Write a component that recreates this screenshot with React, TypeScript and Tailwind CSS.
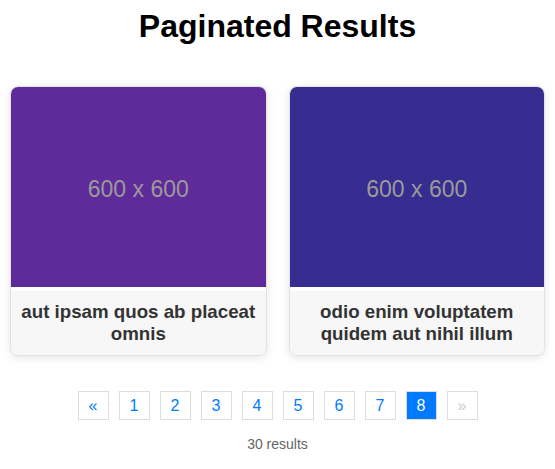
import React from "react";

const items = [
  { title: "aut ipsam quos ab placeat omnis", color: "bg-[#5f2b9b]" },
  { title: "odio enim voluptatem quidem aut nihil illum", color: "bg-[#372c8f]" },
];

export default function App() {
  const pages = [1, 2, 3, 4, 5, 6, 7, 8];
  return (
    <div className="w-[555px] min-h-[469px] bg-white px-[10px] font-['Liberation_Sans',Arial,sans-serif]">
      <h1 className="pt-[8px] text-center text-[32px] font-bold leading-[37px] text-black">
        Paginated Results
      </h1>
      <div className="mt-[41px] grid grid-cols-2 gap-[22px]">
        {items.map((it) => (
          <div
            key={it.title}
            className="overflow-hidden rounded-[8px] border border-[#e2e2e2] bg-white shadow-[0_2px_8px_rgba(0,0,0,0.1)]"
          >
            <div className={`flex h-[200px] items-center justify-center pt-[5px] ${it.color}`}>
              <span className="text-[23px] text-[#9a9a9a]">600 x 600</span>
            </div>
            <div className="mt-[4px] bg-[#f7f7f7] px-[10px] py-[10px] text-center text-[18.72px] font-bold leading-[22px] text-[#333]">
              {it.title}
            </div>
          </div>
        ))}
      </div>
      <div className="mt-[35px] flex justify-center gap-[10px]">
        <button className="h-[29px] w-[31px] border border-[#ddd] bg-white text-[16px] text-[#007bff]">«</button>
        {pages.map((p) => (
          <button
            key={p}
            className={
              p === 8
                ? "h-[29px] w-[31px] border border-[#ddd] bg-[#007bff] text-[16px] text-white"
                : "h-[29px] w-[31px] border border-[#ddd] bg-white text-[16px] text-[#007bff]"
            }
          >
            {p}
          </button>
        ))}
        <button className="h-[29px] w-[31px] border border-[#ddd] bg-white text-[16px] text-[#ccc]">»</button>
      </div>
      <p className="mt-[14px] text-center text-[14px] text-[#666]">30 results</p>
    </div>
  );
}
